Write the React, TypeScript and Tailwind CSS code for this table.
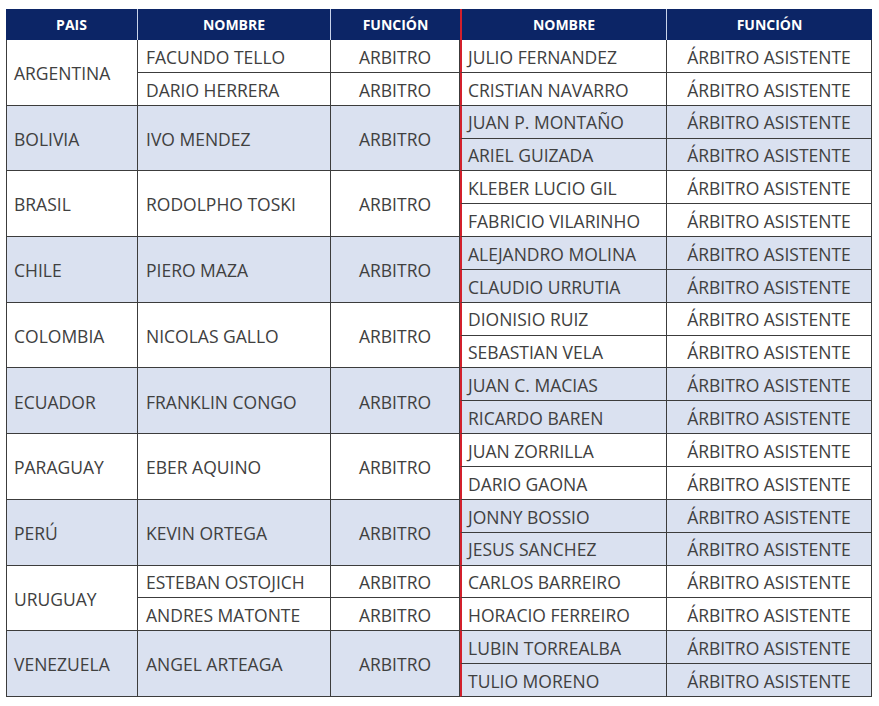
import React from "react";

type Country = {
  pais: string;
  arbitros: string[];
  asistentes: [string, string];
  shaded: boolean;
};

const data: Country[] = [
  { pais: "ARGENTINA", arbitros: ["FACUNDO TELLO", "DARIO HERRERA"], asistentes: ["JULIO FERNANDEZ", "CRISTIAN NAVARRO"], shaded: false },
  { pais: "BOLIVIA", arbitros: ["IVO MENDEZ"], asistentes: ["JUAN P. MONTAÑO", "ARIEL GUIZADA"], shaded: true },
  { pais: "BRASIL", arbitros: ["RODOLPHO TOSKI"], asistentes: ["KLEBER LUCIO GIL", "FABRICIO VILARINHO"], shaded: false },
  { pais: "CHILE", arbitros: ["PIERO MAZA"], asistentes: ["ALEJANDRO MOLINA", "CLAUDIO URRUTIA"], shaded: true },
  { pais: "COLOMBIA", arbitros: ["NICOLAS GALLO"], asistentes: ["DIONISIO RUIZ", "SEBASTIAN VELA"], shaded: false },
  { pais: "ECUADOR", arbitros: ["FRANKLIN CONGO"], asistentes: ["JUAN C. MACIAS", "RICARDO BAREN"], shaded: true },
  { pais: "PARAGUAY", arbitros: ["EBER AQUINO"], asistentes: ["JUAN ZORRILLA", "DARIO GAONA"], shaded: false },
  { pais: "PERÚ", arbitros: ["KEVIN ORTEGA"], asistentes: ["JONNY BOSSIO", "JESUS SANCHEZ"], shaded: true },
  { pais: "URUGUAY", arbitros: ["ESTEBAN OSTOJICH", "ANDRES MATONTE"], asistentes: ["CARLOS BARREIRO", "HORACIO FERREIRO"], shaded: false },
  { pais: "VENEZUELA", arbitros: ["ANGEL ARTEAGA"], asistentes: ["LUBIN TORREALBA", "TULIO MORENO"], shaded: true },
];

const cellBase = "flex items-center border-b border-r border-[#3c3c3c] pt-[3px] text-[17.5px] text-[#404040] leading-none";

export default function App() {
  const cells: React.ReactNode[] = [];
  data.forEach((c, i) => {
    const bg = c.shaded ? "bg-[#dae1f0]" : "bg-white";
    cells.push(
      <div key={`p${i}`} className={`${cellBase} ${bg} row-span-2 border-l pl-[7px]`}>
        {c.pais}
      </div>
    );
    if (c.arbitros.length === 1) {
      cells.push(
        <div key={`n${i}`} className={`${cellBase} ${bg} row-span-2 pl-[8px]`}>
          {c.arbitros[0]}
        </div>
      );
      cells.push(
        <div key={`f${i}`} className={`${cellBase} ${bg} row-span-2 justify-center`}>
          ARBITRO
        </div>
      );
      c.asistentes.forEach((a, j) => {
        cells.push(
          <div key={`a${i}${j}`} className={`${cellBase} ${bg} pl-[6px] border-l-2 border-l-[#d3202c]`}>
            {a}
          </div>
        );
        cells.push(
          <div key={`af${i}${j}`} className={`${cellBase} ${bg} justify-center`}>
            ÁRBITRO ASISTENTE
          </div>
        );
      });
    } else {
      c.arbitros.forEach((n, j) => {
        cells.push(
          <div key={`n${i}${j}`} className={`${cellBase} ${bg} pl-[8px]`}>
            {n}
          </div>
        );
        cells.push(
          <div key={`f${i}${j}`} className={`${cellBase} ${bg} justify-center`}>
            ARBITRO
          </div>
        );
        cells.push(
          <div key={`a${i}${j}`} className={`${cellBase} ${bg} pl-[6px] border-l-2 border-l-[#d3202c]`}>
            {c.asistentes[j]}
          </div>
        );
        cells.push(
          <div key={`af${i}${j}`} className={`${cellBase} ${bg} justify-center`}>
            ÁRBITRO ASISTENTE
          </div>
        );
      });
    }
  });

  const head = "flex items-center justify-center bg-[#0c2566] text-white font-bold text-[14px] border-r border-[#c9d3ea]";

  return (
    <div className="w-[879px] h-[706px] bg-white pt-[9px] pl-[6px]" style={{ fontFamily: '"Open Sans", "Liberation Sans", sans-serif' }}>
      <div className="grid w-[866px] h-[688px] grid-cols-[132px_193px_129px_207px_205px] grid-rows-[31px_repeat(20,minmax(0,1fr))]">
        <div className={head}>PAIS</div>
        <div className={head}>NOMBRE</div>
        <div className={`${head} border-r-0`}>FUNCIÓN</div>
        <div className={`${head} border-l-2 border-l-[#d3202c]`}>NOMBRE</div>
        <div className={`${head} border-r-0`}>FUNCIÓN</div>
        {cells}
      </div>
    </div>
  );
}
